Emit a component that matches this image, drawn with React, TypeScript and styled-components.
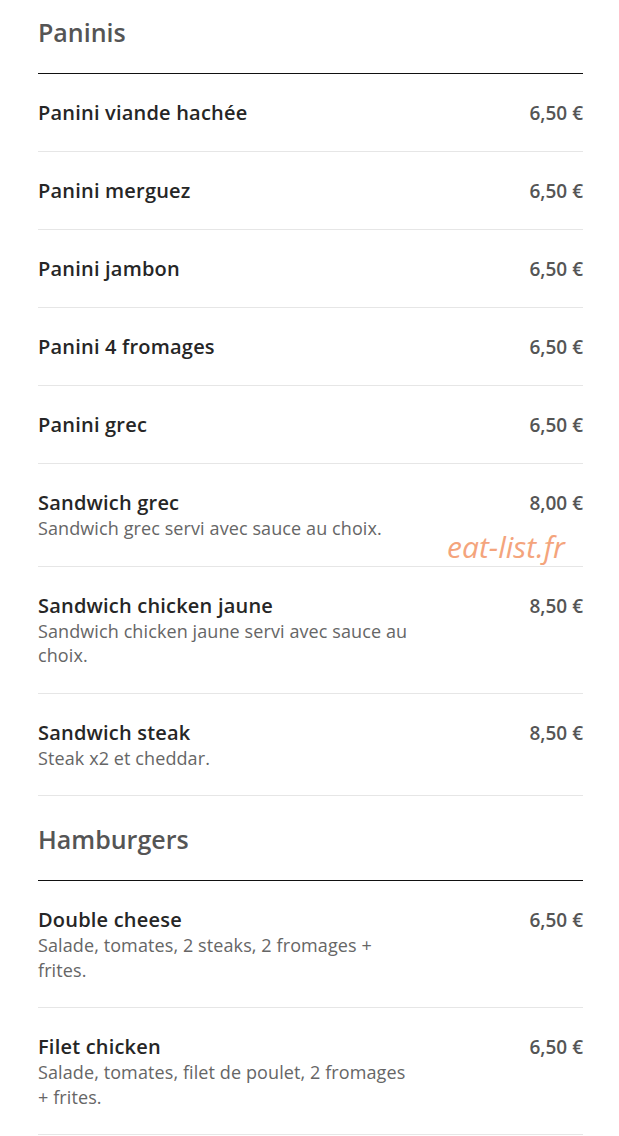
import styled, { createGlobalStyle } from "styled-components";

const GlobalStyle = createGlobalStyle`
  body {
    margin: 0;
    background: #fff;
    font-family: "Open Sans", "Noto Sans", sans-serif;
  }
`;

const Page = styled.div`
  position: relative;
  padding: 16px 36px 0 38px;
`;

const Section = styled.section`
  & + & {
    margin-top: 27px;
  }
`;

const Heading = styled.h2`
  margin: 0;
  font-size: 25px;
  line-height: 32px;
  font-weight: 600;
  color: #555;
  padding-bottom: 25px;
  border-bottom: 1px solid #111;
`;

const Row = styled.div`
  display: flex;
  justify-content: space-between;
  align-items: flex-start;
  padding: 26px 0 25px;
  border-bottom: 1px solid #e6e6e6;
`;

const Info = styled.div`
  max-width: 376px;
`;

const Name = styled.div`
  font-size: 20px;
  line-height: 26px;
  font-weight: 600;
  letter-spacing: 0.2px;
  color: #262626;
`;

const Desc = styled.div`
  font-size: 18px;
  line-height: 24.5px;
  letter-spacing: 0.1px;
  color: #666;
`;

const Price = styled.div`
  font-size: 19px;
  line-height: 26px;
  font-weight: 600;
  color: #555;
  white-space: nowrap;
`;

const Watermark = styled.div`
  position: absolute;
  top: 527px;
  left: 447px;
  font-size: 30px;
  font-style: italic;
  font-weight: 400;
  color: #f4a47c;
  line-height: 40px;
`;

type Item = { name: string; price: string; desc?: string };

const sections: { title: string; items: Item[] }[] = [
  {
    title: "Paninis",
    items: [
      { name: "Panini viande hachée", price: "6,50 €" },
      { name: "Panini merguez", price: "6,50 €" },
      { name: "Panini jambon", price: "6,50 €" },
      { name: "Panini 4 fromages", price: "6,50 €" },
      { name: "Panini grec", price: "6,50 €" },
      {
        name: "Sandwich grec",
        price: "8,00 €",
        desc: "Sandwich grec servi avec sauce au choix.",
      },
      {
        name: "Sandwich chicken jaune",
        price: "8,50 €",
        desc: "Sandwich chicken jaune servi avec sauce au choix.",
      },
      { name: "Sandwich steak", price: "8,50 €", desc: "Steak x2 et cheddar." },
    ],
  },
  {
    title: "Hamburgers",
    items: [
      {
        name: "Double cheese",
        price: "6,50 €",
        desc: "Salade, tomates, 2 steaks, 2 fromages + frites.",
      },
      {
        name: "Filet chicken",
        price: "6,50 €",
        desc: "Salade, tomates, filet de poulet, 2 fromages + frites.",
      },
    ],
  },
];

const App: React.FC = () => {
  return (
    <>
      <GlobalStyle />
      <Page>
        {sections.map((s) => (
          <Section key={s.title}>
            <Heading>{s.title}</Heading>
            {s.items.map((item) => (
              <Row key={item.name}>
                <Info>
                  <Name>{item.name}</Name>
                  {item.desc && <Desc>{item.desc}</Desc>}
                </Info>
                <Price>{item.price}</Price>
              </Row>
            ))}
          </Section>
        ))}
        <Watermark>eat-list.fr</Watermark>
      </Page>
    </>
  );
};

export default App;
